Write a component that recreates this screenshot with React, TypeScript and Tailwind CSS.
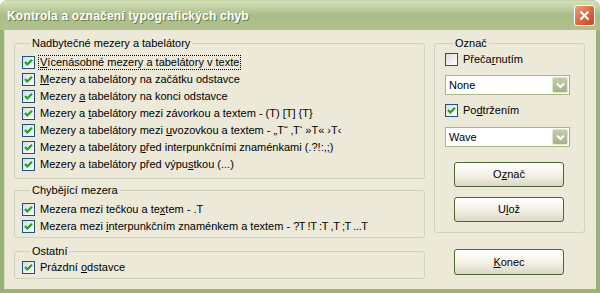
import React from 'react';

const font = { fontFamily: '"Liberation Sans", Arial, sans-serif' };

function CheckBox({ checked }: { checked: boolean }) {
  return (
    <span className="w-[13px] h-[13px] shrink-0 border border-[#1c5180] bg-gradient-to-br from-[#dcdcd7] to-[#ffffff] flex items-center justify-center">
      {checked && (
        <svg width="11" height="11" viewBox="0 0 11 11">
          <path d="M2 5 L4.3 7.5 L9 2.8" fill="none" stroke="#21a121" strokeWidth="2.2" />
        </svg>
      )}
    </span>
  );
}

function Row({ checked = true, children, focus = false }: { checked?: boolean; children: React.ReactNode; focus?: boolean }) {
  return (
    <div className="h-[17px] flex items-center gap-[3px]">
      <CheckBox checked={checked} />
      <span className={focus ? 'border border-dotted border-black px-px leading-[13px] whitespace-nowrap' : 'px-[2px] leading-[13px] whitespace-nowrap'}>
        {children}
      </span>
    </div>
  );
}

function Group({ title, className, children }: { title: string; className: string; children: React.ReactNode }) {
  return (
    <fieldset className={'border border-[#d0d0bf] rounded-[3px] ' + className}>
      <legend className="ml-[8px] px-[2px] text-[11px] leading-[13px] text-black">{title}</legend>
      {children}
    </fieldset>
  );
}

function Combo({ value }: { value: string }) {
  return (
    <div className="w-[125px] h-[20px] border border-[#a5b97f] bg-white flex items-center justify-between pl-[3px] pr-px">
      <span className="leading-[13px]">{value}</span>
      <span className="w-[16px] h-[16px] rounded-[2px] border border-[#dfe6cc] bg-gradient-to-b from-[#c4cfaa] to-[#a3b08a] flex items-center justify-center">
        <svg width="9" height="7" viewBox="0 0 9 7">
          <path d="M1 1.5 L4.5 5 L8 1.5" fill="none" stroke="#ffffff" strokeWidth="2" />
        </svg>
      </span>
    </div>
  );
}

function Button({ children, className = '' }: { children: React.ReactNode; className?: string }) {
  return (
    <button className={'w-[110px] h-[25px] border border-[#4f6633] rounded-[3px] bg-gradient-to-b from-[#ffffff] via-[#f4f2e8] to-[#dcd7c6] text-[11px] text-black ' + className}>
      {children}
    </button>
  );
}

export default function App() {
  return (
    <div className="w-[600px] h-[293px] bg-white" style={font}>
      <div className="w-full h-full rounded-t-[8px] bg-[#9cb079] flex flex-col overflow-hidden">
        <div className="h-[30px] shrink-0 bg-gradient-to-b from-[#d5e0b9] via-[#aabc87] to-[#b2c290] flex items-center justify-between pl-[7px] pr-[5px] border-t border-[#c7d4a8]">
          <span className="text-white font-bold text-[12px] tracking-[0.2px] [text-shadow:1px_1px_0_#6b7f4a]">
            Kontrola a označení typografických chyb
          </span>
          <span className="w-[21px] h-[21px] rounded-[3px] border border-white bg-gradient-to-br from-[#eba07f] via-[#dc6a40] to-[#c44a22] flex items-center justify-center">
            <svg width="11" height="11" viewBox="0 0 11 11">
              <path d="M1.5 1.5 L9.5 9.5 M9.5 1.5 L1.5 9.5" stroke="#ffffff" strokeWidth="2" />
            </svg>
          </span>
        </div>
        <div className="flex-1 mx-[4px] mb-[4px] bg-[#ece9d8] flex pl-[9px] gap-[9px] text-[11px] text-black border-l border-[#d6e0be]">
          <div className="w-[411px] flex flex-col">
            <Group title="Nadbytečné mezery a tabelátory" className="mt-[7px] h-[142px] pl-[7px] pt-[4px]">
              <Row focus>
                <u>V</u>ícenásobné mezery a tabelátory v texte
              </Row>
              <Row>
                <u>M</u>ezery a tabelátory na začátku odstavce
              </Row>
              <Row>
                Mezery <u>a</u> tabelátory na konci odstavce
              </Row>
              <Row>
                Mezery a <u>t</u>abelátory mezi závorkou a textem - (T) [T] {'{T}'}
              </Row>
              <Row>
                Mezery a tabelátory mezi <u>u</u>vozovkou a textem - „T“ ‚T‘ »T« ›T‹
              </Row>
              <Row>
                Mezery a tabelátory <u>p</u>řed interpunkčními znaménkami (.?!:,;)
              </Row>
              <Row>
                Mezery a tabelátory před výpu<u>s</u>tkou (...)
              </Row>
            </Group>
            <Group title="Chybějící mezera" className="mt-[5px] h-[54px] pl-[7px] pt-[4px]">
              <Row>
                Mezera mezi tečkou a te<u>x</u>tem - .T
              </Row>
              <Row>
                Mezera mezi <u>i</u>nterpunkčním znaménkem a textem - <span className="tracking-[-0.4px]">?T !T :T ,T ;T ...T</span>
              </Row>
            </Group>
            <Group title="Ostatní" className="mt-[7px] h-[34px] pl-[7px] pt-[1px]">
              <Row>
                Prázdní <u>o</u>dstavce
              </Row>
            </Group>
          </div>
          <div className="w-[151px] flex flex-col">
            <Group title="Označ" className="mt-[7px] h-[196px] pl-[10px] pt-[1px] flex flex-col">
              <Row checked={false}>
                Přeča<u>r</u>nutím
              </Row>
              <div className="mt-[7px]">
                <Combo value="None" />
              </div>
              <div className="mt-[7px]">
                <Row>
                  Po<u>d</u>tržením
                </Row>
              </div>
              <div className="mt-[8px]">
                <Combo value="Wave" />
              </div>
              <div className="mt-[15px] pl-[9px] flex flex-col gap-[10px]">
                <Button>
                  O<u>z</u>nač
                </Button>
                <Button>
                  U<u>l</u>ož
                </Button>
              </div>
            </Group>
            <div className="mt-[16px] pl-[20px]">
              <Button className="h-[26px]">
                <u>K</u>onec
              </Button>
            </div>
          </div>
        </div>
      </div>
    </div>
  );
}
